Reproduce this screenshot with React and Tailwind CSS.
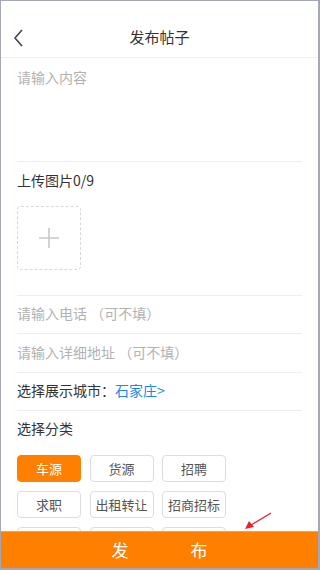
import { useState } from "react";

const categories = ["车源", "货源", "招聘", "求职", "出租转让", "招商招标", "二手", "房产", "其他"];

const Divider = () => <div className="mx-4 h-px bg-[#eeeeee]" />;

export default function App() {
  const [selected, setSelected] = useState("车源");

  return (
    <div
      className="relative flex h-[570px] w-[320px] flex-col overflow-hidden border-t border-l border-r-2 border-b-2 border-[#a3a8b4] bg-white text-[#333333]"
      style={{ fontFamily: '"Noto Sans CJK SC", "Noto Sans", sans-serif' }}
    >
      <div className="flex-1 overflow-hidden">
        {/* header */}
        <div className="relative flex h-[57px] items-center justify-center pt-[14px] border-b border-[#eeeeee]">
          <svg className="absolute left-[11px] top-[27px]" width="14" height="20" viewBox="0 0 14 20">
            <path d="M10 2 L3 10 L10 18" fill="none" stroke="#444" strokeWidth="1.6" />
          </svg>
          <span className="text-[15px] leading-none text-[#333]">发布帖子</span>
        </div>

        <div className="h-[103px] px-4 pt-[9px] text-[14px] leading-5 text-[#b2b2b2]">请输入内容</div>
        <Divider />

        <div className="px-4 pt-[8px] text-[14px] leading-5">上传图片0/9</div>
        <div className="px-4 pt-[16px] pb-[25px]">
          <div className="flex h-16 w-16 items-center justify-center rounded-[4px] border border-dashed border-[#d8d8d8]">
            <svg width="22" height="22" viewBox="0 0 22 22">
              <path d="M11 1 V21 M1 11 H21" stroke="#c8c8c8" strokeWidth="1.6" />
            </svg>
          </div>
        </div>
        <Divider />

        <div className="flex h-[37px] items-center px-4 pb-[3px] text-[14px] text-[#b2b2b2]">请输入电话 （可不填）</div>
        <Divider />
        <div className="flex h-[38px] items-center px-4 pb-[2px] text-[14px] text-[#b2b2b2]">请输入详细地址 （可不填）</div>
        <Divider />
        <div className="flex h-[37px] items-center px-4 pb-[2px] text-[14px]">
          选择展示城市：<span className="text-[#1d87f0]">石家庄&gt;</span>
        </div>
        <Divider />
        <div className="flex h-[37px] items-center px-4 pb-[3px] text-[14px]">选择分类</div>

        <div className="grid w-[209px] grid-cols-3 gap-x-[8.5px] gap-y-[9px] px-4 pt-[7px] box-content">
          {categories.map((c) => (
            <button
              key={c}
              onClick={() => setSelected(c)}
              className={
                selected === c
                  ? "h-[27px] w-16 rounded-[4px] border border-[#ff8000] bg-[#ff8000] text-[13px] text-white"
                  : "h-[27px] w-16 rounded-[4px] border border-[#dddddd] bg-white text-[13px] text-[#555555]"
              }
            >
              {c}
            </button>
          ))}
        </div>
      </div>

      <button className="flex h-[37px] shrink-0 items-center justify-center gap-[62px] border-t border-[#ffa040] bg-[#ff8000] text-[17px] text-white">
        <span>发</span>
        <span>布</span>
      </button>

      {/* annotation arrow */}
      <svg className="pointer-events-none absolute left-[238px] top-[508px]" width="36" height="24" viewBox="0 0 36 24">
        <path d="M32 4 L12 16" stroke="#e8242a" strokeWidth="1.4" />
        <path d="M6 20 L10 12 L15 18 Z" fill="#e8242a" />
      </svg>
    </div>
  );
}
